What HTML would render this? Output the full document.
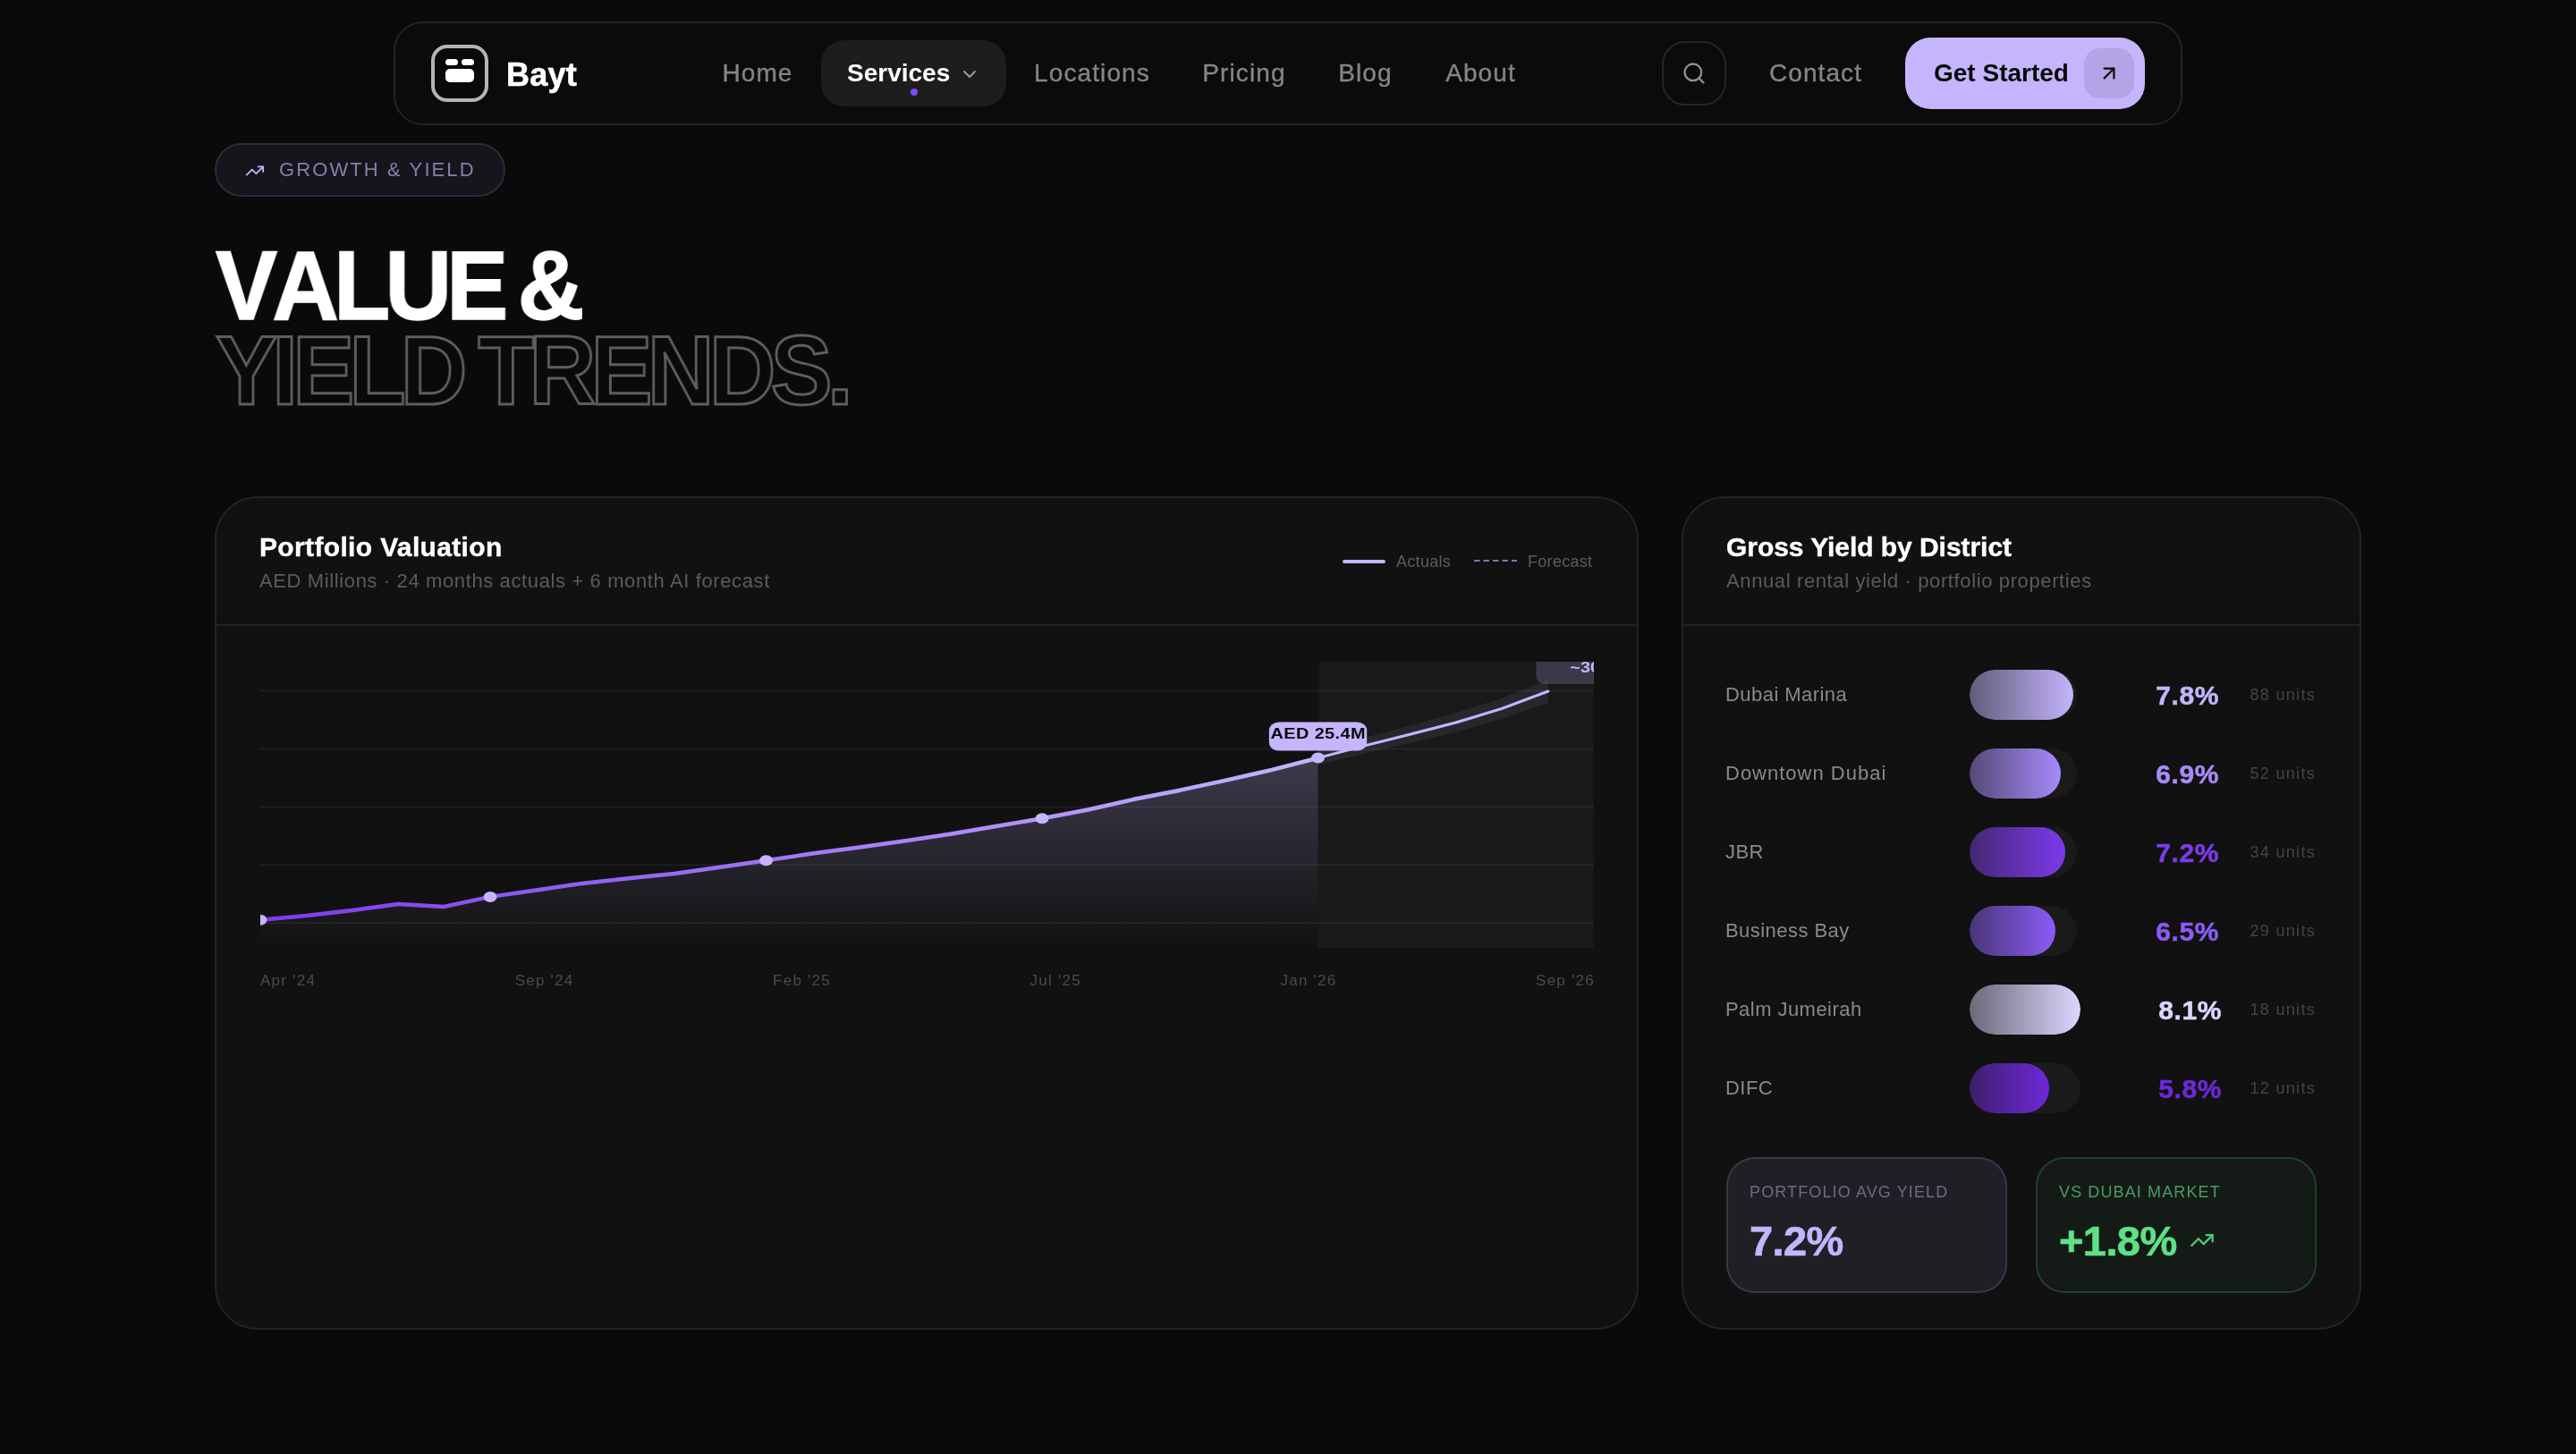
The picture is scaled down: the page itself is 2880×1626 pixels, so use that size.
<!DOCTYPE html>
<html lang="en">
<head>
<meta charset="utf-8">
<title>Bayt — Value &amp; Yield Trends</title>
<style>
*{box-sizing:border-box;margin:0;padding:0}
html,body{width:2880px;height:1626px;overflow:hidden;background:#0a0a0a}
body{position:relative;font-family:"Liberation Sans",sans-serif;color:#fff;-webkit-font-smoothing:antialiased}
.abs{position:absolute}
/* NAV */
.nav{position:absolute;left:440px;top:24px;width:2000px;height:116px;border:2px solid #232323;border-radius:33px;background:#0b0b0b}
.logo{position:absolute;left:40px;top:24px;width:64px;height:64px;border:4px solid #b4b4b4;border-radius:18px;background:#0a0a0a}
.logo i{position:absolute;background:#fff;display:block}
.brand{position:absolute;left:124px;top:26px;height:64px;line-height:64px;font-size:36px;font-weight:700;letter-spacing:.2px;-webkit-text-stroke:.6px #fff}
.nl{position:absolute;top:19px;height:74px;line-height:73px;font-size:28px;color:#858585;text-align:center;white-space:nowrap;letter-spacing:1.1px;-webkit-text-stroke:.35px #858585}
.nl.act{background:#1d1d1d;border-radius:26px;color:#fff;font-weight:700;letter-spacing:0;-webkit-text-stroke:0}
.search{position:absolute;left:1416px;top:20px;width:72px;height:72px;border:2px solid #262626;border-radius:26px}
.cta{position:absolute;left:1688px;top:16px;width:268px;height:80px;border-radius:28px;background:#c4b5fd;color:#0a0a0a}
.cta span{position:absolute;left:32px;top:0;line-height:80px;font-size:28px;font-weight:700;white-space:nowrap}
.cta b{position:absolute;left:200px;top:12px;width:56px;height:56px;border-radius:18px;background:rgba(0,0,0,.09)}
/* HERO */
.badge{position:absolute;left:240px;top:160px;width:325px;height:60px;border:2px solid #2e2b3a;border-radius:30px;background:#16151b}
.badge span{position:absolute;left:70px;top:0;line-height:55px;font-size:22px;letter-spacing:2.1px;color:#867eb0;white-space:nowrap}
h1{position:absolute;left:241px;top:270.5px;font-size:110px;line-height:95.5px;font-weight:700;white-space:nowrap;transform:scaleX(.94);transform-origin:0 0}
h1 .l1{display:block;color:#fff;font-kerning:none;letter-spacing:-6.2px;word-spacing:-7px;-webkit-text-stroke:1.5px #fff}
h1 .l2{display:block;color:transparent;-webkit-text-stroke:3px #5e5e5e;letter-spacing:-6.1px;word-spacing:-6px}
/* CARDS */
.card{position:absolute;top:555px;height:932px;border:2px solid #232323;border-radius:48px;background:#111}
.card .hd{position:absolute;left:0;top:0;right:0;height:143px;border-bottom:2px solid #222}
.card h3{position:absolute;left:48px;top:35px;-webkit-text-stroke:.4px #fff;font-size:30px;line-height:40px;font-weight:700;white-space:nowrap;letter-spacing:.35px}
.card .sub{position:absolute;left:48px;top:78.3px;font-size:22px;line-height:30px;color:#5b5b5b;white-space:nowrap;letter-spacing:.62px}

.legend{position:absolute;top:56px;height:30px;line-height:30px;font-size:18px;color:#5c5c5c;white-space:nowrap;letter-spacing:.3px}
.chart{position:absolute;left:49px;top:183px;display:block;overflow:hidden}
.xl{position:absolute;left:49px;top:527px;width:1492px;display:flex;justify-content:space-between;font-size:17px;line-height:26px;color:#4b4b4b;letter-spacing:1.25px;white-space:nowrap}
.row{position:absolute;left:0;right:0;height:56px}
.row .nm{position:absolute;left:47px;top:0;line-height:56px;font-size:22px;color:#8a8a8a;letter-spacing:.45px;white-space:nowrap}
.row .tr{position:absolute;left:320px;top:0;width:120px;height:56px;border-radius:28px;background:#1a1a1a;overflow:hidden}
.row .tr i{display:block;height:56px;border-radius:28px}
.row .pc{position:absolute;right:157px;top:0;line-height:58px;font-size:30px;font-weight:700;white-space:nowrap;letter-spacing:.6px;-webkit-text-stroke:.5px currentColor}
.row .un{position:absolute;right:49px;top:0;line-height:57px;font-size:18px;color:#444;letter-spacing:1.3px;white-space:nowrap}
.stat{position:absolute;top:737px;width:314px;height:152px;border-radius:32px;border:2px solid}
.stat .lb{position:absolute;left:24px;top:22.7px;font-size:18px;line-height:28px;letter-spacing:1.12px;white-space:nowrap}
.stat .vl{position:absolute;left:24px;top:62.2px;font-size:47px;line-height:60px;font-weight:700;white-space:nowrap;letter-spacing:-.6px;-webkit-text-stroke:.7px currentColor}
@media (max-width:2000px){#root{zoom:.5}}
</style>
</head>
<body>
<div id="root" style="position:absolute;left:0;top:0;width:2880px;height:1626px;transform:translateZ(0);will-change:transform">

<div class="nav">
  <div class="logo">
    <i style="left:12px;top:12px;width:13.5px;height:6.5px;border-radius:4px"></i>
    <i style="left:30px;top:12px;width:14px;height:6.5px;border-radius:4px"></i>
    <i style="left:12px;top:22.5px;width:32px;height:15.5px;border-radius:5px"></i>
  </div>
  <div class="brand">Bayt</div>
  <div class="nl" style="left:339px;width:132px">Home</div>
  <div class="nl act" style="left:476px;width:207px"><span style="position:absolute;left:29px;top:0">Services</span>
    <svg style="position:absolute;left:154px;top:26px" width="24" height="24" viewBox="0 0 24 24" fill="none" stroke="#9a9a9a" stroke-width="2" stroke-linecap="round" stroke-linejoin="round"><path d="M6 9l6 6 6-6"/></svg>
    <i style="position:absolute;left:100px;top:54px;width:8px;height:8px;border-radius:4px;background:#7c4ff0"></i>
  </div>
  <div class="nl" style="left:687px;width:184px">Locations</div>
  <div class="nl" style="left:875px;width:148px">Pricing</div>
  <div class="nl" style="left:1027px;width:115px">Blog</div>
  <div class="nl" style="left:1146px;width:135px">About</div>
  <div class="search">
    <svg style="position:absolute;left:20px;top:20px" width="28" height="28" viewBox="0 0 24 24" fill="none" stroke="#8f8f8f" stroke-width="2" stroke-linecap="round" stroke-linejoin="round"><circle cx="11" cy="11" r="8"/><path d="M21 21l-4.35-4.35"/></svg>
  </div>
  <div class="nl" style="left:1508px;width:160px">Contact</div>
  <div class="cta"><span>Get Started</span><b>
    <svg style="position:absolute;left:15px;top:15px" width="26" height="26" viewBox="0 0 24 24" fill="none" stroke="#0a0a0a" stroke-width="2" stroke-linecap="round" stroke-linejoin="round"><path d="M7 7h10v10"/><path d="M7 17L17 7"/></svg>
  </b></div>
</div>

<div class="badge">
  <svg style="position:absolute;left:32px;top:18px" width="22" height="22" viewBox="0 0 24 24" fill="none" stroke="#c4b5fd" stroke-width="2" stroke-linecap="round" stroke-linejoin="round"><polyline points="22 7 13.5 15.5 8.5 10.5 2 17"/><polyline points="16 7 22 7 22 13"/></svg>
  <span>GROWTH &amp; YIELD</span>
</div>

<h1><span class="l1">VALUE &amp;</span><span class="l2">YIELD TRENDS.</span></h1>

<!-- LEFT CARD -->
<div class="card" id="c1" style="left:240px;width:1592px">
  <div class="hd">
    <h3>Portfolio Valuation</h3>
    <div class="sub">AED Millions · 24 months actuals + 6 month AI forecast</div>
  </div>
  <div class="legend" style="left:1259px"><i style="position:absolute;left:0;top:13px;width:48px;height:4px;border-radius:2px;background:#c4b5fd"></i><span style="position:absolute;left:60px">Actuals</span></div>
  <div class="legend" style="left:1406px"><svg style="position:absolute;left:0;top:12px" width="48" height="4"><line x1="0" y1="2" x2="48" y2="2" stroke="#7d75a3" stroke-width="2" stroke-dasharray="6.5 4"/></svg><span style="position:absolute;left:60px">Forecast</span></div>
<svg class="chart" width="1491" height="320" viewBox="0 0 600 160" preserveAspectRatio="none">
<defs>
<linearGradient id="lg" x1="0" y1="0" x2="1" y2="0"><stop offset="0" stop-color="#7c3aed"/><stop offset="1" stop-color="#c4b5fd"/></linearGradient>
<linearGradient id="ag" x1="0" y1="0" x2="0" y2="1"><stop offset="0" stop-color="#c4b5fd" stop-opacity=".25"/><stop offset="1" stop-color="#c4b5fd" stop-opacity="0"/></linearGradient>
</defs>
<rect x="475.86" y="0" width="124.14" height="160" fill="#fff" fill-opacity=".035"/>
<g stroke="#fff" stroke-opacity=".06" stroke-width="1"><line x1="0" x2="600" y1="16.30" y2="16.30"/><line x1="0" x2="600" y1="48.75" y2="48.75"/><line x1="0" x2="600" y1="81.20" y2="81.20"/><line x1="0" x2="600" y1="113.65" y2="113.65"/><line x1="0" x2="600" y1="146.10" y2="146.10"/></g>
<path d="M0.00,144.40 L20.69,142.00 L41.38,139.00 L62.07,135.50 L82.76,136.95 L103.45,131.45 L124.14,127.75 L144.83,123.95 L165.52,121.15 L186.21,118.50 L206.90,114.85 L227.59,111.15 L248.28,107.25 L268.97,103.85 L289.66,100.25 L310.34,96.40 L331.03,92.00 L351.72,87.65 L372.41,82.75 L393.10,76.90 L413.79,71.85 L434.48,66.30 L455.17,60.45 L475.86,53.80 L475.86,160 L0,160 Z" fill="url(#ag)"/>
<path d="M475.86,49.90 L496.55,42.67 L517.24,35.79 L537.93,28.66 L558.62,20.38 L579.31,10.25 L579.31,22.85 L558.62,32.02 L537.93,39.34 L517.24,45.51 L496.55,51.43 L475.86,57.70 Z" fill="#c4b5fd" fill-opacity=".09"/>
<path d="M475.86,53.80 L496.55,47.05 L517.24,40.65 L537.93,34.00 L558.62,26.20 L579.31,16.55" fill="none" stroke="#c4b5fd" stroke-width="1.5" stroke-linecap="round" stroke-linejoin="round"/>
<path d="M0.00,144.40 L20.69,142.00 L41.38,139.00 L62.07,135.50 L82.76,136.95 L103.45,131.45 L124.14,127.75 L144.83,123.95 L165.52,121.15 L186.21,118.50 L206.90,114.85 L227.59,111.15 L248.28,107.25 L268.97,103.85 L289.66,100.25 L310.34,96.40 L331.03,92.00 L351.72,87.65 L372.41,82.75 L393.10,76.90 L413.79,71.85 L434.48,66.30 L455.17,60.45 L475.86,53.80" fill="none" stroke="url(#lg)" stroke-width="2.25" stroke-linecap="round" stroke-linejoin="round"/>
<g fill="#c4b5fd"><circle cx="0.00" cy="144.40" r="3"/><circle cx="103.45" cy="131.45" r="3"/><circle cx="227.59" cy="111.15" r="3"/><circle cx="351.72" cy="87.65" r="3"/><circle cx="475.86" cy="53.80" r="3"/></g>
<rect x="453.86" y="33.80" width="44" height="16" rx="4.5" fill="#c4b5fd"/>
<text x="475.86" y="42.80" text-anchor="middle" font-family="Liberation Sans, sans-serif" font-size="8" font-weight="700" fill="#0a0a0a" textLength="42.6" lengthAdjust="spacing">AED 25.4M</text>
<rect x="574.00" y="-3.45" width="52" height="16" rx="4.5" fill="#c4b5fd" fill-opacity=".2"/>
<text x="602.70" y="6.15" text-anchor="middle" font-family="Liberation Sans, sans-serif" font-size="8" font-weight="700" fill="#c4b5fd">~30.8M</text>
</svg>
  <div class="xl"><span>Apr '24</span><span>Sep '24</span><span>Feb '25</span><span>Jul '25</span><span>Jan '26</span><span>Sep '26</span></div>

</div>

<!-- RIGHT CARD -->
<div class="card" id="c2" style="left:1880px;width:760px">
  <div class="hd">
    <h3 style="letter-spacing:-.05px">Gross Yield by District</h3>
    <div class="sub">Annual rental yield · portfolio properties</div>
  </div>
  <div class="row" style="top:192px"><span class="nm">Dubai Marina</span><div class="tr" style="width:120px"><i style="width:96.30%;background:linear-gradient(90deg,rgba(196,181,253,0.42),#c4b5fd)"></i></div><span class="pc" style="color:#c4b5fd;right:157px">7.8%</span><span class="un">88 units</span></div>
  <div class="row" style="top:280px"><span class="nm" style="letter-spacing:1px">Downtown Dubai</span><div class="tr" style="width:120px"><i style="width:85.19%;background:linear-gradient(90deg,rgba(167,139,250,0.42),#a78bfa)"></i></div><span class="pc" style="color:#a78bfa;right:157px">6.9%</span><span class="un">52 units</span></div>
  <div class="row" style="top:368px"><span class="nm">JBR</span><div class="tr" style="width:120px"><i style="width:88.89%;background:linear-gradient(90deg,rgba(124,58,237,0.42),#7c3aed)"></i></div><span class="pc" style="color:#7c3aed;right:157px">7.2%</span><span class="un">34 units</span></div>
  <div class="row" style="top:456px"><span class="nm">Business Bay</span><div class="tr" style="width:120px"><i style="width:80.25%;background:linear-gradient(90deg,rgba(139,92,246,0.42),#8b5cf6)"></i></div><span class="pc" style="color:#8b5cf6;right:157px">6.5%</span><span class="un">29 units</span></div>
  <div class="row" style="top:544px"><span class="nm">Palm Jumeirah</span><div class="tr" style="width:124px"><i style="width:100.00%;background:linear-gradient(90deg,rgba(221,214,254,0.42),#ddd6fe)"></i></div><span class="pc" style="color:#ddd6fe;right:154px">8.1%</span><span class="un">18 units</span></div>
  <div class="row" style="top:632px"><span class="nm">DIFC</span><div class="tr" style="width:124px"><i style="width:71.60%;background:linear-gradient(90deg,rgba(109,40,217,0.42),#6d28d9)"></i></div><span class="pc" style="color:#6d28d9;right:154px">5.8%</span><span class="un">12 units</span></div>
  <div class="stat" style="left:48px;background:rgba(196,181,253,.085);border-color:rgba(196,181,253,.16)"><div class="lb" style="color:#6f6988">PORTFOLIO AVG YIELD</div><div class="vl" style="color:#c4b5fd">7.2%</div></div>
  <div class="stat" style="left:394px;background:rgba(74,222,128,.05);border-color:rgba(74,222,128,.2)"><div class="lb" style="color:#4a9c63">VS DUBAI MARKET</div><div class="vl" style="color:#5fe085">+1.8%</div>
    <svg style="position:absolute;left:170px;top:77px" width="28" height="28" viewBox="0 0 24 24" fill="none" stroke="#4fc874" stroke-width="2" stroke-linecap="round" stroke-linejoin="round"><polyline points="22 7 13.5 15.5 8.5 10.5 2 17"/><polyline points="16 7 22 7 22 13"/></svg>
  </div>

</div>

</div>
</body>
</html>
